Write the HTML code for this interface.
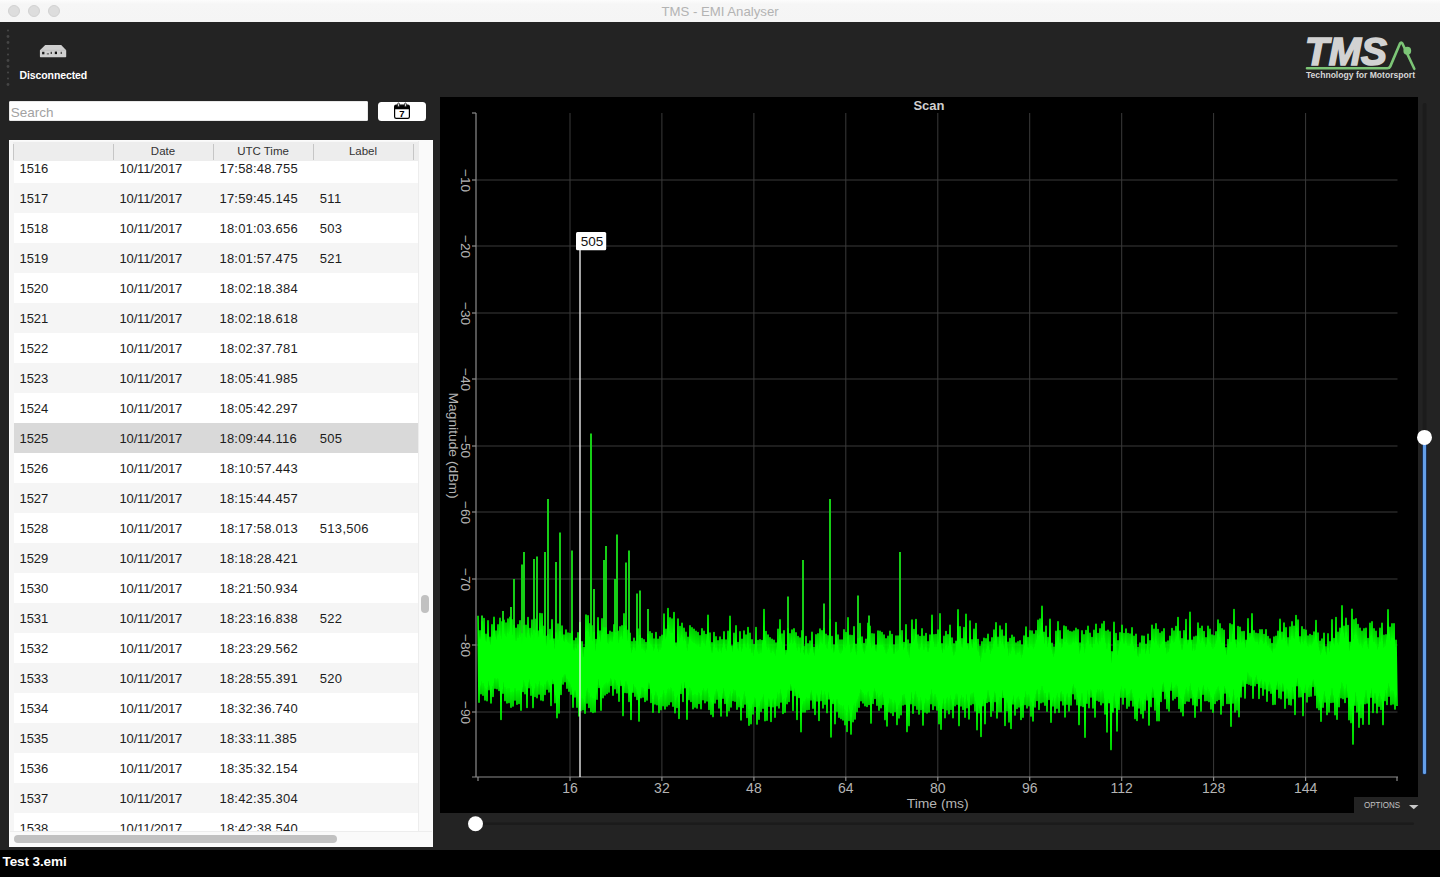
<!DOCTYPE html>
<html><head><meta charset="utf-8"><title>TMS - EMI Analyser</title>
<style>
*{margin:0;padding:0;box-sizing:border-box}
html,body{width:1440px;height:877px;overflow:hidden;background:#232323;font-family:"Liberation Sans",sans-serif}
.abs{position:absolute}
#titlebar{left:0;top:0;width:1440px;height:22px;background:linear-gradient(#fcfcfc 0,#f6f6f6 18%,#f5f5f5 100%);}
#titlebar .t{position:absolute;left:0;width:1440px;top:4px;text-align:center;font-size:13.2px;color:#b3b3b3;letter-spacing:0}
.tl{position:absolute;top:5px;width:12px;height:12px;border-radius:50%;background:#dddddd;border:0.5px solid #d2d2d2}
#disc{left:19.5px;top:69px;font-size:10.5px;font-weight:bold;color:#fff;letter-spacing:-0.1px}
#search{left:9px;top:101px;width:359px;height:20px;background:#fff;border:1px solid #e8e8e8;border-radius:1px;font-size:13.5px;color:#a2a2a2;padding-left:0.8px;line-height:21px}
#calbtn{left:378px;top:102px;width:48px;height:19px;background:#fff;border-radius:3.5px}
#table{left:9px;top:140px;width:424px;height:707px;background:#f6f6f6;border:1px solid #fbfbfb;overflow:hidden}
#thead{position:absolute;left:3px;top:0;width:405px;height:19.5px;background:#ededed;z-index:3;font-size:11.5px;color:#333;border-top:1px solid #f8f8f8}
#thead span{position:absolute;top:2.5px;width:100px;text-align:center}
#thead i{position:absolute;top:1.5px;width:1px;height:16.5px;background:#c6c6c6}
#tbody{position:absolute;left:3.5px;top:0;width:404px;height:690px;overflow:hidden;background:#fff}
.r{position:absolute;left:0;width:404px;height:30px;font-size:13px;color:#1c1c1c;line-height:30px;background:#fff;white-space:nowrap}
.r.alt{background:#f5f5f5}
.r.sel{background:#d9d9d9}
.r span{position:absolute;top:0.5px}
.c0{left:6px;letter-spacing:-0.1px}.c1{left:106px;letter-spacing:-0.15px}.c2{left:206px;letter-spacing:0.2px}.c3{left:306.3px;letter-spacing:0.3px}
#hscroll{position:absolute;left:0;top:690px;width:422px;height:15px;background:#fafafa;border-top:1px solid #ededed}
#hthumb{position:absolute;left:4px;top:3px;width:323px;height:8px;border-radius:4px;background:#c1c1c1}
#vtrack{position:absolute;left:407.5px;top:0;width:15px;height:690px;background:#fafafa;border-left:1px solid #ededed}
#vthumb{position:absolute;left:411px;top:454px;width:8px;height:18px;border-radius:4px;background:#c1c1c1}
#chart{left:440px;top:97px;width:978px;height:716px;background:#000}
#status{left:0;top:850px;width:1440px;height:27px;background:#000;color:#fff;font-weight:bold;font-size:13.5px;line-height:23px;padding-left:2.5px;letter-spacing:-0.1px}
svg text{font-family:"Liberation Sans",sans-serif}
</style></head>
<body>
<div id="titlebar" class="abs">
  <div class="tl" style="left:8px"></div><div class="tl" style="left:28px"></div><div class="tl" style="left:48px"></div>
  <div class="t">TMS - EMI Analyser</div>
</div>

<!-- toolbar -->
<svg class="abs" style="left:0;top:22px" width="120" height="75" viewBox="0 22 120 75">
  <g fill="#454545">
    <circle cx="8" cy="30.5" r="1.1"/><circle cx="8" cy="36.5" r="1.4"/><circle cx="8" cy="42.5" r="1.4"/><circle cx="8" cy="48.5" r="1.1"/>
    <circle cx="8" cy="54.5" r="1.1"/><circle cx="8" cy="60.5" r="1.4"/><circle cx="8" cy="66.5" r="1.4"/><circle cx="8" cy="72.5" r="1.1"/>
    <circle cx="8" cy="78.5" r="1.1"/><circle cx="8" cy="84.5" r="1.4"/>
  </g>
  <!-- device icon -->
  <path d="M45.2 45h16l5 5.2v6.4a.6.6 0 0 1-.6.6H40.500a.6.6 0 0 1-.6-.6V50.200z" fill="#cfcfcf"/>
  <path d="M40.500 50.300h25.500" stroke="#b9b9b9" stroke-width=".6"/>
  <rect x="42.100" y="51.800" width="2.300" height="2.500" fill="#1c1c1c"/>
  <rect x="46.800" y="53" width="2.200" height="1.600" fill="#7a7a7a"/>
  <rect x="50.600" y="51.800" width="1.400" height="2.200" fill="#444"/>
  <rect x="54.800" y="51.600" width="2.200" height="2.500" fill="#111"/>
  <rect x="60.600" y="51.800" width="1.400" height="2.200" fill="#555"/>
</svg>
<div id="disc" class="abs">Disconnected</div>

<!-- logo -->
<svg class="abs" style="left:1296px;top:30px" width="130" height="56" viewBox="1296 30 130 56">
  <text x="1305" y="64.700" font-size="39" font-weight="bold" font-style="italic" fill="#d2d2d2" stroke="#d2d2d2" stroke-width="1.6" textLength="82" lengthAdjust="spacingAndGlyphs">TMS</text>
  <path d="M1307 68.200H1387.500q2 0 2.800-1.800L1400 43.500q1.200-2 2.400 0L1414.300 68.800" fill="none" stroke="#7cc576" stroke-width="2.6" stroke-linecap="round" stroke-linejoin="round"/>
  <circle cx="1407.300" cy="50.700" r="3.900" fill="#7cc576"/>
  <text x="1306" y="78.400" font-size="8.200" font-weight="bold" fill="#d6d6d6" textLength="109" lengthAdjust="spacingAndGlyphs">Technology for Motorsport</text>
</svg>

<div id="search" class="abs">Search</div>
<div id="calbtn" class="abs">
  <svg class="abs" style="left:15px;top:0" width="18" height="19" viewBox="0 0 18 19">
    <rect x="1.600" y="3.200" width="14.800" height="13.200" rx="1.600" fill="#fff" stroke="#000" stroke-width="1.200"/>
    <path d="M1.600 7.300V4.800a1.600 1.600 0 0 1 1.600-1.600h11.600a1.600 1.600 0 0 1 1.600 1.600V7.300z" fill="#000"/>
    <rect x="4.700" y="1" width="1.700" height="3.800" rx=".85" fill="#fff" stroke="#000" stroke-width=".7"/>
    <rect x="11.600" y="1" width="1.700" height="3.800" rx=".85" fill="#fff" stroke="#000" stroke-width=".7"/>
    <text x="9" y="15.100" font-size="9.500" font-weight="bold" text-anchor="middle" fill="#000">7</text>
  </svg>
</div>

<div id="table" class="abs">
  <div id="tbody">
<div class="r" style="top:12.0px"><span class="c0">1516</span><span class="c1">10/11/2017</span><span class="c2">17:58:48.755</span><span class="c3"></span></div>
<div class="r alt" style="top:42.0px"><span class="c0">1517</span><span class="c1">10/11/2017</span><span class="c2">17:59:45.145</span><span class="c3">511</span></div>
<div class="r" style="top:72.0px"><span class="c0">1518</span><span class="c1">10/11/2017</span><span class="c2">18:01:03.656</span><span class="c3">503</span></div>
<div class="r alt" style="top:102.0px"><span class="c0">1519</span><span class="c1">10/11/2017</span><span class="c2">18:01:57.475</span><span class="c3">521</span></div>
<div class="r" style="top:132.0px"><span class="c0">1520</span><span class="c1">10/11/2017</span><span class="c2">18:02:18.384</span><span class="c3"></span></div>
<div class="r alt" style="top:162.0px"><span class="c0">1521</span><span class="c1">10/11/2017</span><span class="c2">18:02:18.618</span><span class="c3"></span></div>
<div class="r" style="top:192.0px"><span class="c0">1522</span><span class="c1">10/11/2017</span><span class="c2">18:02:37.781</span><span class="c3"></span></div>
<div class="r alt" style="top:222.0px"><span class="c0">1523</span><span class="c1">10/11/2017</span><span class="c2">18:05:41.985</span><span class="c3"></span></div>
<div class="r" style="top:252.0px"><span class="c0">1524</span><span class="c1">10/11/2017</span><span class="c2">18:05:42.297</span><span class="c3"></span></div>
<div class="r alt sel" style="top:282.0px"><span class="c0">1525</span><span class="c1">10/11/2017</span><span class="c2">18:09:44.116</span><span class="c3">505</span></div>
<div class="r" style="top:312.0px"><span class="c0">1526</span><span class="c1">10/11/2017</span><span class="c2">18:10:57.443</span><span class="c3"></span></div>
<div class="r alt" style="top:342.0px"><span class="c0">1527</span><span class="c1">10/11/2017</span><span class="c2">18:15:44.457</span><span class="c3"></span></div>
<div class="r" style="top:372.0px"><span class="c0">1528</span><span class="c1">10/11/2017</span><span class="c2">18:17:58.013</span><span class="c3">513,506</span></div>
<div class="r alt" style="top:402.0px"><span class="c0">1529</span><span class="c1">10/11/2017</span><span class="c2">18:18:28.421</span><span class="c3"></span></div>
<div class="r" style="top:432.0px"><span class="c0">1530</span><span class="c1">10/11/2017</span><span class="c2">18:21:50.934</span><span class="c3"></span></div>
<div class="r alt" style="top:462.0px"><span class="c0">1531</span><span class="c1">10/11/2017</span><span class="c2">18:23:16.838</span><span class="c3">522</span></div>
<div class="r" style="top:492.0px"><span class="c0">1532</span><span class="c1">10/11/2017</span><span class="c2">18:23:29.562</span><span class="c3"></span></div>
<div class="r alt" style="top:522.0px"><span class="c0">1533</span><span class="c1">10/11/2017</span><span class="c2">18:28:55.391</span><span class="c3">520</span></div>
<div class="r" style="top:552.0px"><span class="c0">1534</span><span class="c1">10/11/2017</span><span class="c2">18:32:36.740</span><span class="c3"></span></div>
<div class="r alt" style="top:582.0px"><span class="c0">1535</span><span class="c1">10/11/2017</span><span class="c2">18:33:11.385</span><span class="c3"></span></div>
<div class="r" style="top:612.0px"><span class="c0">1536</span><span class="c1">10/11/2017</span><span class="c2">18:35:32.154</span><span class="c3"></span></div>
<div class="r alt" style="top:642.0px"><span class="c0">1537</span><span class="c1">10/11/2017</span><span class="c2">18:42:35.304</span><span class="c3"></span></div>
<div class="r" style="top:672.0px"><span class="c0">1538</span><span class="c1">10/11/2017</span><span class="c2">18:42:38.540</span><span class="c3"></span></div>

  </div>
  <div id="thead"><i style="left:0"></i><i style="left:100px"></i><i style="left:200px"></i><i style="left:300px"></i><i style="left:400px"></i>
    <span style="left:100px">Date</span><span style="left:200px">UTC Time</span><span style="left:300px">Label</span></div>
  <div id="vtrack"></div><div id="vthumb"></div>
  <div id="hscroll"><div id="hthumb"></div></div>
</div>

<div id="chart" class="abs"></div>
<svg class="abs" style="left:440px;top:97px" width="1000" height="752" viewBox="440 97 1000 752">
  <g stroke="#3a3a3a" stroke-width="1"><line x1="570.0" y1="113" x2="570.0" y2="777" /><line x1="661.9" y1="113" x2="661.9" y2="777" /><line x1="753.9" y1="113" x2="753.9" y2="777" /><line x1="845.8" y1="113" x2="845.8" y2="777" /><line x1="937.8" y1="113" x2="937.8" y2="777" /><line x1="1029.7" y1="113" x2="1029.7" y2="777" /><line x1="1121.7" y1="113" x2="1121.7" y2="777" /><line x1="1213.6" y1="113" x2="1213.6" y2="777" /><line x1="1305.6" y1="113" x2="1305.6" y2="777" /><line x1="476" y1="180.0" x2="1397.5" y2="180.0" /><line x1="476" y1="246.0" x2="1397.5" y2="246.0" /><line x1="476" y1="313.0" x2="1397.5" y2="313.0" /><line x1="476" y1="379.0" x2="1397.5" y2="379.0" /><line x1="476" y1="446.0" x2="1397.5" y2="446.0" /><line x1="476" y1="512.0" x2="1397.5" y2="512.0" /><line x1="476" y1="579.0" x2="1397.5" y2="579.0" /><line x1="476" y1="645.0" x2="1397.5" y2="645.0" /><line x1="476" y1="712.0" x2="1397.5" y2="712.0" /></g>
  <path d="M591 433.5V650M548 499.0V650M560 532.5V650M572 550.5V650M524 552.0V650M534 559.0V650M537 556.5V650M545 552.0V650M556 562.0V650M514 579.0V650M522 564.5V650M606 546.0V650M604 560.0V650M617 534.5V650M629 550.5V650M626 562.5V650M615 579.0V650M594 589.0V650M640 590.5V650M637 593.5V650M648 609.0V650M503 611.0V650M511 607.0V650M482 615.5V650M803 560.0V650M830 499.0V650M900 552.0V650M788 596.5V650M858 595.5V650M824 603.5V650M869 615.5V650" fill="none" stroke="#18d818" stroke-width="1.9"/><path d="M478.0 615.8L479.0 702.2L480.0 630.7L481.0 693.7L482.0 621.5L483.0 695.2L484.0 618.5L485.0 700.0L486.0 634.4L487.0 700.8L488.0 620.8L489.0 689.8L490.0 637.4L491.0 702.9L492.0 624.8L493.0 696.4L494.0 617.4L495.0 688.2L496.0 631.1L497.0 688.8L498.0 624.9L499.0 690.4L500.0 618.2L501.0 719.5L502.0 621.9L503.0 693.3L504.0 620.3L505.0 700.6L506.0 623.0L507.0 702.9L508.0 619.1L509.0 702.6L510.0 617.3L511.0 707.2L512.0 619.9L513.0 706.1L514.0 625.5L515.0 700.1L516.0 628.2L517.0 704.2L518.0 624.8L519.0 703.4L520.0 620.7L521.0 710.3L522.0 633.8L523.0 691.4L524.0 625.7L525.0 693.8L526.0 625.3L527.0 707.5L528.0 617.6L529.0 687.8L530.0 628.6L531.0 695.2L532.0 620.0L533.0 707.6L534.0 630.3L535.0 696.5L536.0 619.4L537.0 697.8L538.0 631.1L539.0 694.1L540.0 613.6L541.0 700.0L542.0 613.8L543.0 700.6L544.0 626.3L545.0 694.4L546.0 636.3L547.0 689.3L548.0 634.8L549.0 691.9L550.0 629.5L551.0 705.5L552.0 619.7L553.0 683.6L554.0 639.0L555.0 702.7L556.0 632.9L557.0 717.8L558.0 624.0L559.0 713.0L560.0 631.6L561.0 694.5L562.0 626.1L563.0 684.1L564.0 635.1L565.0 681.8L566.0 630.0L567.0 688.3L568.0 633.1L569.0 691.2L570.0 633.6L571.0 694.2L572.0 631.7L573.0 707.3L574.0 640.9L575.0 696.9L576.0 638.3L577.0 707.3L578.0 632.8L579.0 716.0L580.0 622.5L581.0 710.6L582.0 641.7L583.0 709.7L584.0 647.6L585.0 713.3L586.0 615.0L587.0 703.1L588.0 615.7L589.0 707.4L590.0 623.9L591.0 711.4L592.0 625.9L593.0 712.5L594.0 632.2L595.0 711.9L596.0 639.5L597.0 699.2L598.0 617.8L599.0 687.4L600.0 631.1L601.0 710.3L602.0 618.9L603.0 697.7L604.0 627.8L605.0 695.0L606.0 627.9L607.0 693.4L608.0 634.6L609.0 692.1L610.0 631.3L611.0 685.4L612.0 632.2L613.0 695.3L614.0 624.9L615.0 688.8L616.0 632.8L617.0 692.9L618.0 631.3L619.0 701.2L620.0 626.9L621.0 685.5L622.0 625.9L623.0 715.6L624.0 613.9L625.0 692.5L626.0 626.0L627.0 692.7L628.0 630.4L629.0 701.5L630.0 633.2L631.0 719.5L632.0 641.7L633.0 692.2L634.0 638.3L635.0 696.2L636.0 641.3L637.0 699.4L638.0 629.1L639.0 721.1L640.0 635.4L641.0 697.8L642.0 638.6L643.0 697.1L644.0 639.9L645.0 701.5L646.0 642.5L647.0 700.1L648.0 634.2L649.0 688.4L650.0 631.7L651.0 702.4L652.0 633.5L653.0 712.3L654.0 639.0L655.0 703.9L656.0 632.5L657.0 704.8L658.0 639.3L659.0 712.4L660.0 636.7L661.0 709.7L662.0 635.3L663.0 705.7L664.0 614.1L665.0 709.0L666.0 629.4L667.0 706.1L668.0 608.5L669.0 704.6L670.0 617.9L671.0 701.7L672.0 619.0L673.0 706.3L674.0 612.5L675.0 712.7L676.0 643.1L677.0 707.5L678.0 619.0L679.0 718.4L680.0 626.6L681.0 693.5L682.0 623.2L683.0 701.5L684.0 628.4L685.0 687.7L686.0 632.4L687.0 719.2L688.0 637.2L689.0 699.6L690.0 625.7L691.0 701.4L692.0 627.7L693.0 708.7L694.0 629.2L695.0 707.1L696.0 631.4L697.0 708.1L698.0 632.5L699.0 703.4L700.0 635.7L701.0 708.8L702.0 628.7L703.0 699.8L704.0 631.3L705.0 702.7L706.0 634.6L707.0 700.9L708.0 615.3L709.0 709.4L710.0 633.0L711.0 714.2L712.0 642.8L713.0 716.6L714.0 632.6L715.0 703.0L716.0 636.9L717.0 699.2L718.0 640.9L719.0 707.9L720.0 637.1L721.0 715.9L722.0 639.8L723.0 698.3L724.0 631.9L725.0 703.5L726.0 640.0L727.0 715.9L728.0 631.2L729.0 710.8L730.0 616.2L731.0 707.0L732.0 646.0L733.0 700.6L734.0 633.3L735.0 701.2L736.0 625.9L737.0 709.2L738.0 642.6L739.0 706.8L740.0 631.7L741.0 720.0L742.0 639.2L743.0 707.5L744.0 631.1L745.0 704.1L746.0 635.0L747.0 717.5L748.0 627.6L749.0 725.2L750.0 633.2L751.0 723.7L752.0 639.9L753.0 714.0L754.0 644.6L755.0 706.5L756.0 627.6L757.0 724.1L758.0 640.6L759.0 719.2L760.0 639.9L761.0 711.4L762.0 640.6L763.0 708.2L764.0 609.5L765.0 720.7L766.0 631.5L767.0 720.2L768.0 635.1L769.0 706.2L770.0 637.8L771.0 721.5L772.0 639.2L773.0 706.8L774.0 640.4L775.0 717.3L776.0 643.0L777.0 705.7L778.0 629.2L779.0 707.9L780.0 619.9L781.0 702.1L782.0 634.0L783.0 713.4L784.0 630.8L785.0 712.2L786.0 650.6L787.0 703.7L788.0 628.6L789.0 701.4L790.0 633.7L791.0 690.2L792.0 630.0L793.0 710.5L794.0 628.9L795.0 695.6L796.0 632.9L797.0 719.5L798.0 636.5L799.0 697.4L800.0 638.0L801.0 731.8L802.0 630.9L803.0 711.9L804.0 646.6L805.0 711.9L806.0 636.5L807.0 709.8L808.0 643.8L809.0 709.5L810.0 641.1L811.0 700.0L812.0 632.2L813.0 708.3L814.0 647.3L815.0 714.5L816.0 634.9L817.0 701.0L818.0 633.9L819.0 720.5L820.0 629.0L821.0 700.6L822.0 630.7L823.0 707.9L824.0 628.6L825.0 704.2L826.0 634.3L827.0 712.6L828.0 635.9L829.0 699.0L830.0 619.5L831.0 736.9L832.0 636.5L833.0 703.5L834.0 645.1L835.0 723.7L836.0 622.6L837.0 711.3L838.0 635.1L839.0 717.2L840.0 640.0L841.0 718.6L842.0 640.0L843.0 719.9L844.0 629.9L845.0 724.7L846.0 632.6L847.0 731.4L848.0 617.7L849.0 720.4L850.0 635.4L851.0 734.1L852.0 635.6L853.0 721.8L854.0 626.7L855.0 719.1L856.0 644.2L857.0 711.6L858.0 638.7L859.0 707.2L860.0 623.5L861.0 700.8L862.0 637.1L863.0 703.0L864.0 643.5L865.0 705.7L866.0 639.2L867.0 706.5L868.0 623.2L869.0 704.5L870.0 626.2L871.0 723.1L872.0 633.9L873.0 703.4L874.0 634.1L875.0 698.5L876.0 645.2L877.0 705.3L878.0 631.0L879.0 710.3L880.0 631.3L881.0 707.8L882.0 632.6L883.0 704.4L884.0 635.0L885.0 719.6L886.0 638.9L887.0 726.0L888.0 636.4L889.0 711.8L890.0 631.2L891.0 712.7L892.0 634.5L893.0 715.4L894.0 645.0L895.0 711.4L896.0 636.0L897.0 724.6L898.0 636.0L899.0 718.0L900.0 635.3L901.0 714.7L902.0 630.7L903.0 705.0L904.0 642.6L905.0 704.3L906.0 624.8L907.0 731.6L908.0 640.0L909.0 725.6L910.0 643.8L911.0 703.7L912.0 620.1L913.0 713.3L914.0 629.6L915.0 705.6L916.0 619.6L917.0 709.2L918.0 635.0L919.0 714.1L920.0 636.6L921.0 709.7L922.0 628.9L923.0 725.1L924.0 636.3L925.0 712.1L926.0 633.5L927.0 712.9L928.0 641.8L929.0 711.9L930.0 635.0L931.0 703.7L932.0 615.2L933.0 709.5L934.0 634.7L935.0 705.7L936.0 634.5L937.0 710.1L938.0 630.1L939.0 723.8L940.0 613.7L941.0 729.2L942.0 643.8L943.0 708.4L944.0 636.4L945.0 717.7L946.0 631.5L947.0 709.9L948.0 634.8L949.0 713.8L950.0 625.3L951.0 709.4L952.0 638.0L953.0 717.7L954.0 643.9L955.0 705.8L956.0 641.3L957.0 704.2L958.0 609.9L959.0 725.6L960.0 626.8L961.0 706.0L962.0 638.7L963.0 709.4L964.0 627.6L965.0 717.3L966.0 614.2L967.0 707.8L968.0 643.7L969.0 718.9L970.0 621.1L971.0 704.8L972.0 639.9L973.0 703.6L974.0 629.3L975.0 710.9L976.0 623.6L977.0 729.7L978.0 639.5L979.0 712.7L980.0 646.4L981.0 736.4L982.0 641.9L983.0 705.7L984.0 638.3L985.0 723.8L986.0 638.7L987.0 702.4L988.0 634.4L989.0 701.4L990.0 642.1L991.0 716.3L992.0 637.9L993.0 710.7L994.0 630.1L995.0 701.6L996.0 622.7L997.0 718.0L998.0 637.4L999.0 711.7L1000.0 626.1L1001.0 711.8L1002.0 630.1L1003.0 697.4L1004.0 636.4L1005.0 725.5L1006.0 623.6L1007.0 710.8L1008.0 642.2L1009.0 721.9L1010.0 638.5L1011.0 728.4L1012.0 635.2L1013.0 704.0L1014.0 637.2L1015.0 715.1L1016.0 643.0L1017.0 708.4L1018.0 641.9L1019.0 707.0L1020.0 640.8L1021.0 719.5L1022.0 645.0L1023.0 717.2L1024.0 636.1L1025.0 704.6L1026.0 627.0L1027.0 708.0L1028.0 637.5L1029.0 705.7L1030.0 630.7L1031.0 716.1L1032.0 631.0L1033.0 721.0L1034.0 634.3L1035.0 706.9L1036.0 630.8L1037.0 700.4L1038.0 620.4L1039.0 709.4L1040.0 619.1L1041.0 702.7L1042.0 606.4L1043.0 702.0L1044.0 632.3L1045.0 705.3L1046.0 626.3L1047.0 711.3L1048.0 637.6L1049.0 699.5L1050.0 619.4L1051.0 722.2L1052.0 643.4L1053.0 706.0L1054.0 647.0L1055.0 712.8L1056.0 631.4L1057.0 708.2L1058.0 621.8L1059.0 712.2L1060.0 630.9L1061.0 700.8L1062.0 639.4L1063.0 704.9L1064.0 626.1L1065.0 716.9L1066.0 626.8L1067.0 704.3L1068.0 630.3L1069.0 710.9L1070.0 631.5L1071.0 705.0L1072.0 632.0L1073.0 693.8L1074.0 631.0L1075.0 698.9L1076.0 628.4L1077.0 704.7L1078.0 629.8L1079.0 724.6L1080.0 643.0L1081.0 705.8L1082.0 630.9L1083.0 706.5L1084.0 634.7L1085.0 737.3L1086.0 630.5L1087.0 703.3L1088.0 626.4L1089.0 707.7L1090.0 633.2L1091.0 697.1L1092.0 637.6L1093.0 708.0L1094.0 630.4L1095.0 717.1L1096.0 624.2L1097.0 700.2L1098.0 633.5L1099.0 701.3L1100.0 628.9L1101.0 704.8L1102.0 624.0L1103.0 702.7L1104.0 621.5L1105.0 714.0L1106.0 631.4L1107.0 732.0L1108.0 630.4L1109.0 702.8L1110.0 632.0L1111.0 749.6L1112.0 651.8L1113.0 712.1L1114.0 622.4L1115.0 707.6L1116.0 633.6L1117.0 731.0L1118.0 640.7L1119.0 709.4L1120.0 632.7L1121.0 697.2L1122.0 625.2L1123.0 704.1L1124.0 633.5L1125.0 697.3L1126.0 629.1L1127.0 708.2L1128.0 633.5L1129.0 706.1L1130.0 634.1L1131.0 700.3L1132.0 627.8L1133.0 705.9L1134.0 636.3L1135.0 718.6L1136.0 634.3L1137.0 720.5L1138.0 647.3L1139.0 707.9L1140.0 643.0L1141.0 713.6L1142.0 636.0L1143.0 718.0L1144.0 636.2L1145.0 710.2L1146.0 644.2L1147.0 700.0L1148.0 634.3L1149.0 725.1L1150.0 640.7L1151.0 706.6L1152.0 625.3L1153.0 697.3L1154.0 629.4L1155.0 710.1L1156.0 623.7L1157.0 720.7L1158.0 629.5L1159.0 720.8L1160.0 633.4L1161.0 701.4L1162.0 631.8L1163.0 691.3L1164.0 628.9L1165.0 698.7L1166.0 642.2L1167.0 708.6L1168.0 641.1L1169.0 711.0L1170.0 636.3L1171.0 690.2L1172.0 628.5L1173.0 700.0L1174.0 631.0L1175.0 698.2L1176.0 626.6L1177.0 696.4L1178.0 617.5L1179.0 708.5L1180.0 631.2L1181.0 711.8L1182.0 638.8L1183.0 715.8L1184.0 630.8L1185.0 703.4L1186.0 619.6L1187.0 700.9L1188.0 640.2L1189.0 701.3L1190.0 612.2L1191.0 698.0L1192.0 640.2L1193.0 704.7L1194.0 637.0L1195.0 717.3L1196.0 636.4L1197.0 705.8L1198.0 623.0L1199.0 698.5L1200.0 628.6L1201.0 711.1L1202.0 626.2L1203.0 694.2L1204.0 631.5L1205.0 700.7L1206.0 637.7L1207.0 700.5L1208.0 626.3L1209.0 701.6L1210.0 629.4L1211.0 708.9L1212.0 635.0L1213.0 712.2L1214.0 635.8L1215.0 703.5L1216.0 631.9L1217.0 700.7L1218.0 620.0L1219.0 699.5L1220.0 623.9L1221.0 714.1L1222.0 628.9L1223.0 705.5L1224.0 630.3L1225.0 693.1L1226.0 647.9L1227.0 703.5L1228.0 639.6L1229.0 703.5L1230.0 623.8L1231.0 726.3L1232.0 624.9L1233.0 703.1L1234.0 609.5L1235.0 711.9L1236.0 640.1L1237.0 709.9L1238.0 626.5L1239.0 716.8L1240.0 627.2L1241.0 696.9L1242.0 631.7L1243.0 686.2L1244.0 631.6L1245.0 698.1L1246.0 640.2L1247.0 683.4L1248.0 618.9L1249.0 684.3L1250.0 633.5L1251.0 685.3L1252.0 613.9L1253.0 698.2L1254.0 630.8L1255.0 685.7L1256.0 633.2L1257.0 683.5L1258.0 633.8L1259.0 698.4L1260.0 629.9L1261.0 687.5L1262.0 629.7L1263.0 695.2L1264.0 634.6L1265.0 688.9L1266.0 629.8L1267.0 701.2L1268.0 636.6L1269.0 690.7L1270.0 639.1L1271.0 693.3L1272.0 643.5L1273.0 704.4L1274.0 637.1L1275.0 704.2L1276.0 636.3L1277.0 689.2L1278.0 631.4L1279.0 697.7L1280.0 619.4L1281.0 698.7L1282.0 632.2L1283.0 691.0L1284.0 623.0L1285.0 708.2L1286.0 627.7L1287.0 698.1L1288.0 637.9L1289.0 704.5L1290.0 627.0L1291.0 704.9L1292.0 621.9L1293.0 698.6L1294.0 626.3L1295.0 714.5L1296.0 615.5L1297.0 685.7L1298.0 620.1L1299.0 697.0L1300.0 636.9L1301.0 696.8L1302.0 626.7L1303.0 715.6L1304.0 629.6L1305.0 692.4L1306.0 630.3L1307.0 702.0L1308.0 636.0L1309.0 696.5L1310.0 634.5L1311.0 696.1L1312.0 635.5L1313.0 686.5L1314.0 632.0L1315.0 695.3L1316.0 620.5L1317.0 707.8L1318.0 633.0L1319.0 709.7L1320.0 641.2L1321.0 721.3L1322.0 639.0L1323.0 707.3L1324.0 633.2L1325.0 702.1L1326.0 646.8L1327.0 714.6L1328.0 633.9L1329.0 711.9L1330.0 641.9L1331.0 702.4L1332.0 619.9L1333.0 702.2L1334.0 638.6L1335.0 714.7L1336.0 617.5L1337.0 719.2L1338.0 632.4L1339.0 706.7L1340.0 628.3L1341.0 697.8L1342.0 605.9L1343.0 698.6L1344.0 626.4L1345.0 702.5L1346.0 618.2L1347.0 697.3L1348.0 625.5L1349.0 719.8L1350.0 642.3L1351.0 722.6L1352.0 609.3L1353.0 744.1L1354.0 619.9L1355.0 705.3L1356.0 618.7L1357.0 711.9L1358.0 624.5L1359.0 727.2L1360.0 628.3L1361.0 717.6L1362.0 631.4L1363.0 724.2L1364.0 628.9L1365.0 703.7L1366.0 628.3L1367.0 703.1L1368.0 638.6L1369.0 724.3L1370.0 623.3L1371.0 697.3L1372.0 621.8L1373.0 712.5L1374.0 628.9L1375.0 702.9L1376.0 631.2L1377.0 712.7L1378.0 637.9L1379.0 706.2L1380.0 628.3L1381.0 709.4L1382.0 623.3L1383.0 724.6L1384.0 635.4L1385.0 700.6L1386.0 634.9L1387.0 704.5L1388.0 609.9L1389.0 696.3L1390.0 627.2L1391.0 704.6L1392.0 623.9L1393.0 703.9L1394.0 623.8L1395.0 709.1L1396.0 640.2L1397.0 705.9" fill="none" stroke="#00ff00" stroke-width="1.6" stroke-linejoin="round"/>
  <g stroke="#8c8c8c" stroke-width="1.2"><line x1="478.0" y1="777" x2="478.0" y2="781" /><line x1="570.0" y1="777" x2="570.0" y2="781" /><line x1="661.9" y1="777" x2="661.9" y2="781" /><line x1="753.9" y1="777" x2="753.9" y2="781" /><line x1="845.8" y1="777" x2="845.8" y2="781" /><line x1="937.8" y1="777" x2="937.8" y2="781" /><line x1="1029.7" y1="777" x2="1029.7" y2="781" /><line x1="1121.7" y1="777" x2="1121.7" y2="781" /><line x1="1213.6" y1="777" x2="1213.6" y2="781" /><line x1="1305.6" y1="777" x2="1305.6" y2="781" /><line x1="1397" y1="777" x2="1397" y2="781" /><line x1="472" y1="113.0" x2="476" y2="113.0" /><line x1="472" y1="180.0" x2="476" y2="180.0" /><line x1="472" y1="246.0" x2="476" y2="246.0" /><line x1="472" y1="313.0" x2="476" y2="313.0" /><line x1="472" y1="379.0" x2="476" y2="379.0" /><line x1="472" y1="446.0" x2="476" y2="446.0" /><line x1="472" y1="512.0" x2="476" y2="512.0" /><line x1="472" y1="579.0" x2="476" y2="579.0" /><line x1="472" y1="645.0" x2="476" y2="645.0" /><line x1="472" y1="712.0" x2="476" y2="712.0" /><line x1="476" y1="113" x2="476" y2="777"/><line x1="472" y1="777" x2="1398" y2="777"/></g>
  <g font-size="14" fill="#b4b4b4"><text x="570.0" y="793" text-anchor="middle">16</text><text x="661.9" y="793" text-anchor="middle">32</text><text x="753.9" y="793" text-anchor="middle">48</text><text x="845.8" y="793" text-anchor="middle">64</text><text x="937.8" y="793" text-anchor="middle">80</text><text x="1029.7" y="793" text-anchor="middle">96</text><text x="1121.7" y="793" text-anchor="middle">112</text><text x="1213.6" y="793" text-anchor="middle">128</text><text x="1305.6" y="793" text-anchor="middle">144</text></g>
  <g font-size="13.500" fill="#b4b4b4"><text transform="translate(461 180.5) rotate(90)" text-anchor="middle" textLength="23.2" lengthAdjust="spacingAndGlyphs">−10</text><text transform="translate(461 246.5) rotate(90)" text-anchor="middle" textLength="23.2" lengthAdjust="spacingAndGlyphs">−20</text><text transform="translate(461 313.5) rotate(90)" text-anchor="middle" textLength="23.2" lengthAdjust="spacingAndGlyphs">−30</text><text transform="translate(461 379.5) rotate(90)" text-anchor="middle" textLength="23.2" lengthAdjust="spacingAndGlyphs">−40</text><text transform="translate(461 446.5) rotate(90)" text-anchor="middle" textLength="23.2" lengthAdjust="spacingAndGlyphs">−50</text><text transform="translate(461 512.5) rotate(90)" text-anchor="middle" textLength="23.2" lengthAdjust="spacingAndGlyphs">−60</text><text transform="translate(461 579.5) rotate(90)" text-anchor="middle" textLength="23.2" lengthAdjust="spacingAndGlyphs">−70</text><text transform="translate(461 645.5) rotate(90)" text-anchor="middle" textLength="23.2" lengthAdjust="spacingAndGlyphs">−80</text><text transform="translate(461 712.5) rotate(90)" text-anchor="middle" textLength="23.2" lengthAdjust="spacingAndGlyphs">−90</text></g>
  <text x="929" y="110" font-size="13" font-weight="bold" fill="#cfcfcf" text-anchor="middle">Scan</text>
  <text x="937.700" y="807.500" font-size="13.500" fill="#b4b4b4" text-anchor="middle" textLength="62" lengthAdjust="spacingAndGlyphs">Time (ms)</text>
  <text transform="translate(448.500 445.500) rotate(90)" font-size="13.500" fill="#b4b4b4" text-anchor="middle" textLength="106" lengthAdjust="spacingAndGlyphs">Magnitude (dBm)</text>
  <!-- cursor -->
  <rect x="579" y="250" width="2" height="527" fill="#fff" fill-opacity=".64"/>
  <rect x="576" y="232" width="30.200" height="18.200" rx="1.500" fill="#fff"/>
  <text x="592.100" y="246.100" font-size="13.500" fill="#111" text-anchor="middle">505</text>
  <!-- options -->
  <rect x="1354" y="797" width="64" height="16" fill="#232323"/>
  <text x="1364" y="808.200" font-size="8.200" fill="#c4c4c4" textLength="36" lengthAdjust="spacingAndGlyphs">OPTIONS</text>
  <path d="M1409 805h9.500l-4.750 4.300z" fill="#c8c8c8"/>
  <!-- h slider -->
  <rect x="476" y="822.500" width="938" height="2.500" rx="1.200" fill="#1b1b1b"/>
  <circle cx="475.500" cy="823.700" r="7.500" fill="#fff"/>
  <!-- v slider -->
  <rect x="1422.800" y="103" width="3.700" height="672" rx="1.500" fill="#1c1c1c"/>
  <rect x="1422.400" y="437" width="4.200" height="337.500" rx="1.500" fill="#1a3f7a"/>
  <rect x="1423" y="437" width="3" height="337" rx="1.200" fill="#649fe9"/>
  <circle cx="1424.500" cy="437.400" r="7.500" fill="#fff"/>
</svg>

<div id="status" class="abs">Test 3.emi</div>
</body></html>
